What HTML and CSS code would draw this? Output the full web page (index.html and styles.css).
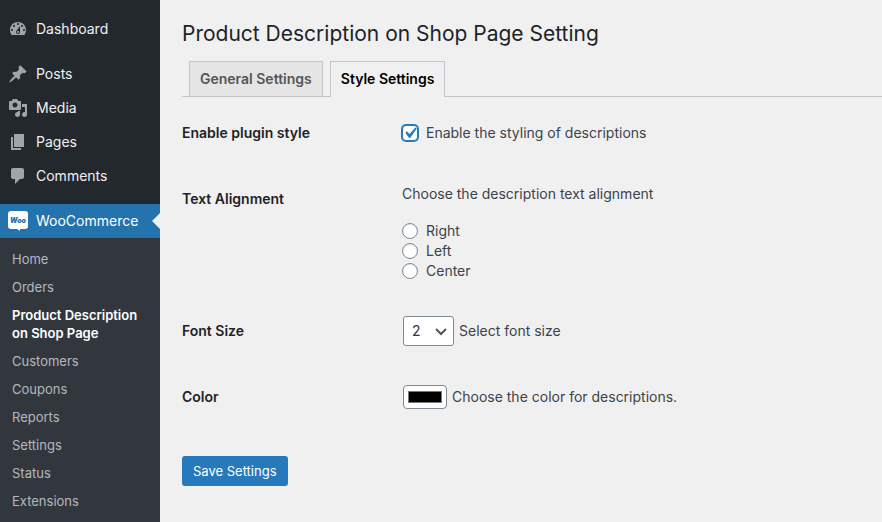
FILE: index.html
```html
<!DOCTYPE html>
<html lang="en">
  <head>
    <meta charset="UTF-8" />
    <meta name="viewport" content="width=device-width, initial-scale=1.0" />
    <title>Product Description on Shop Page Setting</title>
    <link rel="stylesheet" href="styles.css">
  </head>
  <body>
    <nav class="admin-menu">
      <ul class="menu">
        <li>
          <a href="#">
            <svg class="icon" viewBox="0 0 20 20"><path d="M3.76 16h12.48c1.1-1.37 1.76-3.11 1.76-5 0-4.42-3.58-8-8-8s-8 3.58-8 8c0 1.89.66 3.63 1.76 5zM10 4c.55 0 1 .45 1 1s-.45 1-1 1-1-.45-1-1 .45-1 1-1zM6 6c.55 0 1 .45 1 1s-.45 1-1 1-1-.45-1-1 .45-1 1-1zm8 0c.55 0 1 .45 1 1s-.45 1-1 1-1-.45-1-1 .45-1 1-1zm-5.37 5.55L12 7v6c0 1.1-.9 2-2 2s-2-.9-2-2c0-.57.24-1.08.63-1.45zM4 10c.55 0 1 .45 1 1s-.45 1-1 1-1-.45-1-1 .45-1 1-1zm12 0c.55 0 1 .45 1 1s-.45 1-1 1-1-.45-1-1 .45-1 1-1zm-5 3c0-.55-.45-1-1-1s-1 .45-1 1 .45 1 1 1 1-.45 1-1z"/></svg>
            Dashboard
          </a>
        </li>
        <li class="spaced">
          <a href="#">
            <svg class="icon" viewBox="0 0 20 20"><path d="M10.44 3.02l1.82-1.82 6.36 6.35-1.83 1.82c-1.05-.68-2.48-.57-3.41.36l-.75.75c-.92.93-1.04 2.35-.35 3.41l-1.83 1.82-2.41-2.41-2.8 2.79c-.42.42-3.38 2.71-3.8 2.29s1.86-3.39 2.28-3.81l2.79-2.79L4.1 9.36l1.83-1.82c1.05.69 2.48.57 3.4-.36l.75-.75c.93-.92 1.05-2.35.36-3.41z"/></svg>
            Posts
          </a>
        </li>
        <li>
          <a href="#">
            <svg class="icon" viewBox="0 0 20 20"><path d="M13 11V4c0-.55-.45-1-1-1h-1.67L9 1H5L3.67 3H2c-.55 0-1 .45-1 1v7c0 .55.45 1 1 1h10c.55 0 1-.45 1-1zM7 4.5c1.38 0 2.5 1.12 2.5 2.5S8.38 9.5 7 9.5 4.5 8.38 4.5 7 5.62 4.5 7 4.5zM14 6h5v10.5c0 1.38-1.12 2.5-2.5 2.5S14 17.88 14 16.5s1.12-2.5 2.5-2.5c.17 0 .34.02.5.05V9h-3V6zm-4 8.05V13h2v3.5c0 1.38-1.12 2.5-2.5 2.5S7 17.88 7 16.5 8.12 14 9.5 14c.17 0 .34.02.5.05z"/></svg>
            Media
          </a>
        </li>
        <li>
          <a href="#">
            <svg class="icon" viewBox="0 0 20 20"><path d="M6 15V2h10v13H6zm-1 1h8v2H3V5h2v11z"/></svg>
            Pages
          </a>
        </li>
        <li>
          <a href="#">
            <svg class="icon" viewBox="0 0 20 20"><path d="M5 2h9c1.1 0 2 .9 2 2v7c0 1.1-.9 2-2 2h-2l-5 5v-5H5c-1.1 0-2-.9-2-2V4c0-1.1.9-2 2-2z"/></svg>
            Comments
          </a>
        </li>
        <li class="spaced current">
          <a href="#">
            <svg class="icon" viewBox="0 0 20 20">
              <path d="M3 0h14a3 3 0 0 1 3 3v12a3 3 0 0 1-3 3h-5v2l-3-2H3a3 3 0 0 1-3-3V3a3 3 0 0 1 3-3z"/>
              <text class="woo" x="10" y="12" text-anchor="middle">Woo</text>
            </svg>
            WooCommerce
          </a>
        </li>
      </ul>
      <ul class="submenu">
        <li><a href="#">Home</a></li>
        <li><a href="#">Orders</a></li>
        <li><a href="#" class="active">Product Description on Shop Page</a></li>
        <li><a href="#">Customers</a></li>
        <li><a href="#">Coupons</a></li>
        <li><a href="#">Reports</a></li>
        <li><a href="#">Settings</a></li>
        <li><a href="#">Status</a></li>
        <li><a href="#">Extensions</a></li>
      </ul>
    </nav>

    <main class="content">
      <h1>Product Description on Shop Page Setting</h1>
      <div class="tabs">
        <a href="#" class="tab">General Settings</a>
        <a href="#" class="tab tab-active">Style Settings</a>
      </div>

      <form>
        <div class="row">
          <label class="title" for="enable">Enable plugin style</label>
          <div class="field">
            <span class="check-wrap">
              <input type="checkbox" id="enable" class="check" checked />
              <svg class="tick" viewBox="0 0 20 20"><path d="M14.83 4.89l1.34.94-5.81 8.38H9.02L5.78 9.67l1.34-1.25 2.57 2.4z"/></svg>
            </span>
            <label for="enable">Enable the styling of descriptions</label>
          </div>
        </div>
        <div class="row">
          <div class="title" id="align-title">Text Alignment</div>
          <div class="options" role="radiogroup" aria-labelledby="align-title">
            <p>Choose the description text alignment</p>
            <label><input type="radio" name="align" value="right" class="radio" />Right</label>
            <label><input type="radio" name="align" value="left" class="radio" />Left</label>
            <label><input type="radio" name="align" value="center" class="radio" />Center</label>
          </div>
        </div>
        <div class="row">
          <label class="title" for="size">Font Size</label>
          <div class="field control">
            <span class="select-wrap">
              <select id="size">
                <option>1</option>
                <option selected>2</option>
                <option>3</option>
                <option>4</option>
              </select>
              <svg class="arrow" viewBox="0 0 16 16"><path d="M3 6l5 5 5-5"/></svg>
            </span>
            <label for="size">Select font size</label>
          </div>
        </div>
        <div class="row">
          <label class="title" for="color">Color</label>
          <div class="field control">
            <input type="color" id="color" value="#000000" />
            <label for="color">Choose the color for descriptions.</label>
          </div>
        </div>
        <button type="submit" class="save">Save Settings</button>
      </form>
    </main>
  </body>
</html>
```
FILE: styles.css
```css
* {
  box-sizing: border-box;
}
body {
  margin: 0;
  display: flex;
  min-height: 100vh;
  background: #f0f0f1;
  color: #3c434a;
  font-family: Inter, "Liberation Sans", sans-serif;
  font-size: 14px;
  line-height: 20px;
}
ul {
  list-style: none;
  margin: 0;
  padding: 0;
}
a {
  text-decoration: none;
}

/* sidebar */
.admin-menu {
  flex: 0 0 160px;
  padding-top: 12px;
  background: #23282c;
}
.menu a {
  display: flex;
  align-items: center;
  gap: 8px;
  height: 34px;
  padding: 0 8px;
  color: #f0f0f1;
}
.spaced {
  margin-top: 11px;
}
.icon {
  width: 20px;
  height: 20px;
  fill: #a0a5aa;
}
.current {
  position: relative;
  background: #2473ac;
}
.current a {
  color: #fff;
}
.current .icon {
  fill: #fff;
}
.current .woo {
  fill: #2473ac;
  font-size: 7px;
  font-weight: 900;
  font-style: italic;
}
.current::after {
  content: "";
  position: absolute;
  right: 0;
  top: 9px;
  border: 8px solid transparent;
  border-right-color: #f0f0f1;
  border-left-width: 0;
}
.submenu {
  padding: 7px 0;
  background: #32373e;
}
.submenu a {
  display: block;
  padding: 5px 12px;
  font-size: 13px;
  line-height: 18px;
  color: #b4b9be;
}
.submenu .active {
  color: #fff;
  font-weight: 600;
}

/* settings page */
.content {
  flex: 1;
  min-width: 0;
  padding: 19px 0 20px 22px;
}
h1 {
  margin: 0;
  font-size: 21px;
  font-weight: 400;
  line-height: 30px;
  color: #1d2327;
}
.tabs {
  display: flex;
  gap: 7px;
  margin-top: 12px;
  padding-left: 7px;
  border-bottom: 1px solid #c3c4c7;
}
.tab {
  padding: 7px 10px;
  border: 1px solid #c3c4c7;
  border-bottom: 0;
  background: #e5e5e5;
  color: #555;
  font-weight: 600;
}
.tab-active {
  margin-bottom: -1px;
  padding-bottom: 8px;
  background: #f0f0f1;
  color: #000;
}
form {
  padding-top: 6px;
}
.row {
  display: grid;
  grid-template-columns: 220px 1fr;
}
.title {
  padding-top: 20px;
  font-weight: 600;
  color: #1d2327;
}
.field {
  display: flex;
  align-items: center;
  gap: 8px;
  min-height: 66px;
  padding: 14px 0 20px;
}
.control {
  gap: 5px;
  padding-left: 1px;
}
.options {
  padding: 15px 0 20px;
}
.options p {
  margin: 0 0 17px;
}
.options label {
  display: flex;
  align-items: center;
  gap: 8px;
}
.check,
.radio {
  appearance: none;
  width: 16px;
  height: 16px;
  margin: 0;
  border: 1px solid #7e8993;
  background: #fff;
}
.radio {
  border-radius: 50%;
  box-shadow: inset 0 1px 2px rgba(0, 0, 0, 0.1);
}
.check {
  border-radius: 4px;
  border-color: #267abc;
  box-shadow: 0 0 0 1px #267abc;
}
.check-wrap,
.select-wrap {
  display: grid;
  align-items: center;
}
.check-wrap > *,
.select-wrap > * {
  grid-area: 1 / 1;
}
.tick {
  display: none;
  width: 22px;
  height: 22px;
  margin: -3px;
  fill: #267abc;
  pointer-events: none;
}
.check:checked + .tick {
  display: block;
}
select {
  appearance: none;
  height: 30px;
  padding: 0 31px 0 8px;
  border: 1px solid #7e8993;
  border-radius: 3px;
  background: #fff;
  color: #32373c;
  font: inherit;
}
.arrow {
  justify-self: end;
  width: 16px;
  height: 16px;
  margin-right: 5px;
  fill: none;
  stroke: #555;
  stroke-width: 2;
  pointer-events: none;
}
input[type="color"] {
  width: 44px;
  height: 24px;
  margin: 0;
  padding: 1px 2px;
  border: 1px solid #7e8993;
  border-radius: 4px;
  background: #fff;
}
.save {
  margin-top: 23px;
  height: 30px;
  padding: 0 11px;
  border: 0;
  border-radius: 3px;
  background: #267abc;
  color: #fff;
  font: inherit;
  font-size: 13px;
}
```
